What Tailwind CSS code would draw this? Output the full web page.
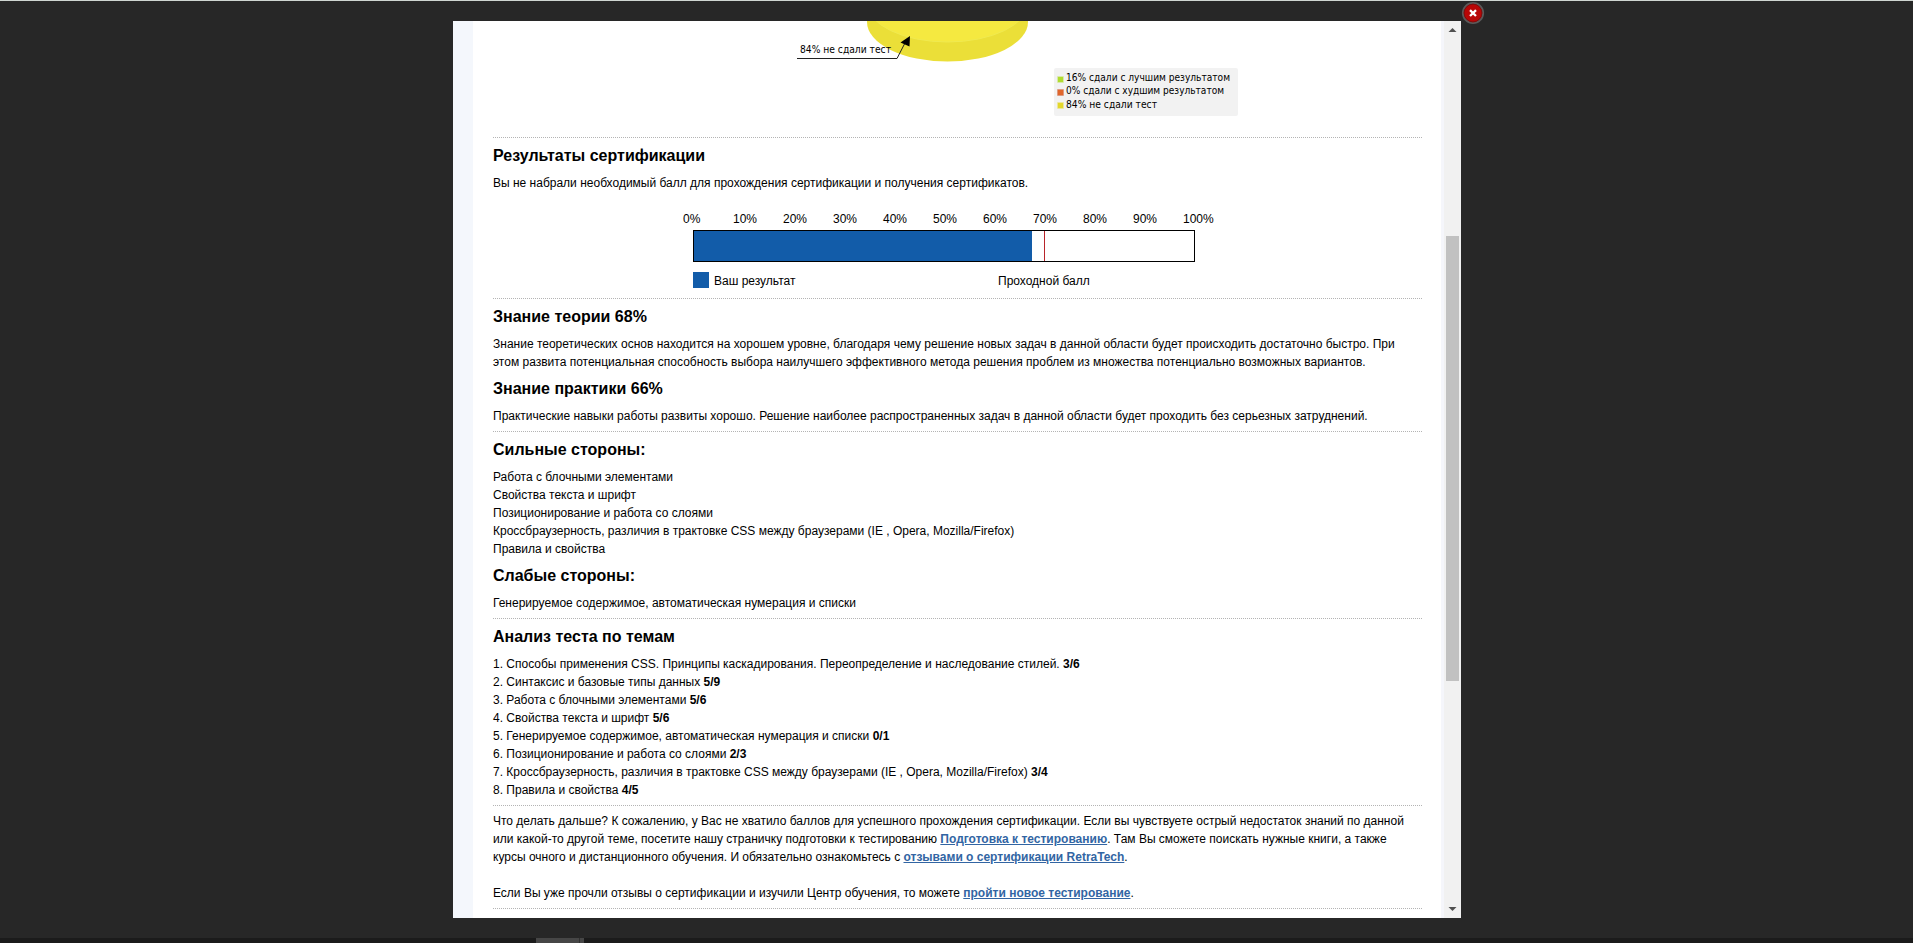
<!DOCTYPE html>
<html lang="ru">
<head>
<meta charset="utf-8">
<title>Результаты сертификации</title>
<script src="https://cdn.jsdelivr.net/npm/@tailwindcss/browser@4"></script>
</head>
<body class="relative h-[943px] w-[1913px] overflow-hidden border-t border-[#cfd6d2] bg-[#272727] font-['Liberation_Sans',Arial,sans-serif] text-[12px] leading-[18px] text-black">
<main class="ml-[453px] mt-[20px] flex h-[897px] w-[1008px] overflow-hidden bg-white">
  <div class="w-[20px] shrink-0 bg-[#f4f7fc]"></div>
  <div class="w-[968px] shrink-0 pl-[20px] pr-[19px]">
    <section class="relative h-[116px]">
      <svg class="block" width="929" height="116" viewBox="493 21 929 116">
        <ellipse cx="947.5" cy="22" rx="80.5" ry="39.5" fill="#ebdf38"/>
        <ellipse cx="947.5" cy="3" rx="80.5" ry="39" fill="#f5e940" stroke="#f0ea50"/>
        <path d="M797 58.5H897L906 41" fill="none" stroke="#222"/>
        <path d="M910 36L900.5 42.5L909.5 46.5Z" fill="#000"/>
        <rect x="1054" y="68" width="184" height="48" rx="2" fill="#f2f2f2"/>
        <rect x="1057" y="76" width="7" height="7" rx="1" fill="#d9e8a8"/>
        <rect x="1058" y="77" width="5" height="5" fill="#b0dc30"/>
        <rect x="1057" y="89" width="7" height="7" rx="1" fill="#dd9a80"/>
        <rect x="1058" y="90" width="5" height="5" fill="#e0662c"/>
        <rect x="1057" y="102" width="7" height="7" rx="1" fill="#ece69a"/>
        <rect x="1058" y="103" width="5" height="5" fill="#e3d72c"/>
        <g font-family="'DejaVu Sans Condensed','DejaVu Sans',sans-serif" font-size="11" fill="#000">
          <text x="800" y="53" textLength="91" lengthAdjust="spacingAndGlyphs">84% не сдали тест</text>
          <text x="1066" y="81" textLength="164" lengthAdjust="spacingAndGlyphs">16% сдали с лучшим результатом</text>
          <text x="1066" y="94" textLength="158" lengthAdjust="spacingAndGlyphs">0% сдали с худшим результатом</text>
          <text x="1066" y="108" textLength="91" lengthAdjust="spacingAndGlyphs">84% не сдали тест</text>
        </g>
      </svg>
    </section>
    <section class="h-[161px] border-t border-dotted border-[#b4b4b4] pt-[6px]">
      <h2 class="mb-[6px] text-[16px] font-bold leading-[24px]">Результаты сертификации</h2>
      <p>Вы не набрали необходимый балл для прохождения сертификации и получения сертификатов.</p>
      <div class="ml-[190px] mt-[18px] flex leading-[18px]">
        <span class="w-[50px]">0%</span><span class="w-[50px]">10%</span><span class="w-[50px]">20%</span><span class="w-[50px]">30%</span><span class="w-[50px]">40%</span><span class="w-[50px]">50%</span><span class="w-[50px]">60%</span><span class="w-[50px]">70%</span><span class="w-[50px]">80%</span><span class="w-[50px]">90%</span><span>100%</span>
      </div>
      <div class="ml-[200px] mt-[2px] flex h-[32px] w-[502px] border border-black">
        <div class="w-[338px] bg-[#125ca9]"></div>
        <div class="ml-[12px] w-px bg-[#b8242a]"></div>
      </div>
      <div class="ml-[200px] mt-[10px] flex">
        <span class="mr-[5px] size-[16px] bg-[#125ca9]"></span>
        <span class="w-[284px]">Ваш результат</span>
        <span>Проходной балл</span>
      </div>
    </section>
    <section class="h-[133px] border-t border-dotted border-[#b4b4b4] pt-[6px]">
      <h2 class="mb-[6px] text-[16px] font-bold leading-[24px]">Знание теории 68%</h2>
      <p class="whitespace-nowrap">Знание теоретических основ находится на хорошем уровне, благодаря чему решение новых задач в данной области будет происходить достаточно быстро. При<br>этом развита потенциальная способность выбора наилучшего эффективного метода решения проблем из множества потенциально возможных вариантов.</p>
      <h2 class="my-[6px] text-[16px] font-bold leading-[24px]">Знание практики 66%</h2>
      <p>Практические навыки работы развиты хорошо. Решение наиболее распространенных задач в данной области будет проходить без серьезных затруднений.</p>
    </section>
    <section class="h-[187px] border-t border-dotted border-[#b4b4b4] pt-[6px]">
      <h2 class="mb-[6px] text-[16px] font-bold leading-[24px]">Сильные стороны:</h2>
      <p>Работа с блочными элементами</p>
      <p>Свойства текста и шрифт</p>
      <p>Позиционирование и работа со слоями</p>
      <p>Кроссбраузерность, различия в трактовке CSS между браузерами (IE , Opera, Mozilla/Firefox)</p>
      <p>Правила и свойства</p>
      <h2 class="my-[6px] text-[16px] font-bold leading-[24px]">Слабые стороны:</h2>
      <p>Генерируемое содержимое, автоматическая нумерация и списки</p>
    </section>
    <section class="h-[187px] border-t border-dotted border-[#b4b4b4] pt-[6px]">
      <h2 class="mb-[6px] text-[16px] font-bold leading-[24px]">Анализ теста по темам</h2>
      <p>1. Способы применения CSS. Принципы каскадирования. Переопределение и наследование стилей. <b>3/6</b></p>
      <p>2. Синтаксис и базовые типы данных <b>5/9</b></p>
      <p>3. Работа с блочными элементами <b>5/6</b></p>
      <p>4. Свойства текста и шрифт <b>5/6</b></p>
      <p>5. Генерируемое содержимое, автоматическая нумерация и списки <b>0/1</b></p>
      <p>6. Позиционирование и работа со слоями <b>2/3</b></p>
      <p>7. Кроссбраузерность, различия в трактовке CSS между браузерами (IE , Opera, Mozilla/Firefox) <b>3/4</b></p>
      <p>8. Правила и свойства <b>4/5</b></p>
    </section>
    <section class="h-[103px] whitespace-nowrap border-t border-dotted border-[#b4b4b4] pt-[6px]">
      <p>Что делать дальше? К сожалению, у Вас не хватило баллов для успешного прохождения сертификации. Если вы чувствуете острый недостаток знаний по данной<br>или какой-то другой теме, посетите нашу страничку подготовки к тестированию <a class="font-bold text-[#3265a3] underline">Подготовка к тестированию</a>. Там Вы сможете поискать нужные книги, а также<br>курсы очного и дистанционного обучения. И обязательно ознакомьтесь с <a class="font-bold text-[#3265a3] underline">отзывами о сертификации RetraTech</a>.</p>
      <p class="mt-[18px]">Если Вы уже прочли отзывы о сертификации и изучили Центр обучения, то можете <a class="font-bold text-[#3265a3] underline">пройти новое тестирование</a>.</p>
    </section>
    <div class="border-t border-dotted border-[#b4b4b4]"></div>
  </div>
  <div class="w-[3px] shrink-0 bg-[#f5f6fb]"></div>
  <div class="flex w-[17px] shrink-0 flex-col items-center bg-[#f1f1f1]">
    <svg class="block h-[17px] w-[17px] shrink-0" viewBox="0 0 17 17"><path d="M4.500 11L8.500 7L12.500 11Z" fill="#505050"/></svg>
    <div class="mt-[198px] h-[445px] w-[13px] bg-[#c1c1c1]"></div>
    <svg class="mt-auto block h-[17px] w-[17px] shrink-0" viewBox="0 0 17 17"><path d="M4.500 6L8.500 10L12.500 6Z" fill="#505050"/></svg>
  </div>
</main>
<svg class="absolute left-[1461px] top-0 block" width="24" height="24" viewBox="1461 1 24 24">
  <circle cx="1473" cy="13" r="10.200" fill="#b80606" stroke="#5a5a5a" stroke-width="1.800"/>
  <circle cx="1473" cy="13" r="8.900" fill="none" stroke="#6d1010" stroke-width=".8"/>
  <path d="M1470 10.200L1476 16M1476 10.200L1470 16" stroke="#fff" stroke-width="2.300"/>
</svg>
<footer class="mt-[20px] h-[5px] bg-[#1b1b1b]">
  <div class="ml-[536px] flex h-full w-[48px] justify-end bg-[#464646]"><div class="mr-[4px] w-px bg-[#303030]"></div></div>
</footer>
</body>
</html>
